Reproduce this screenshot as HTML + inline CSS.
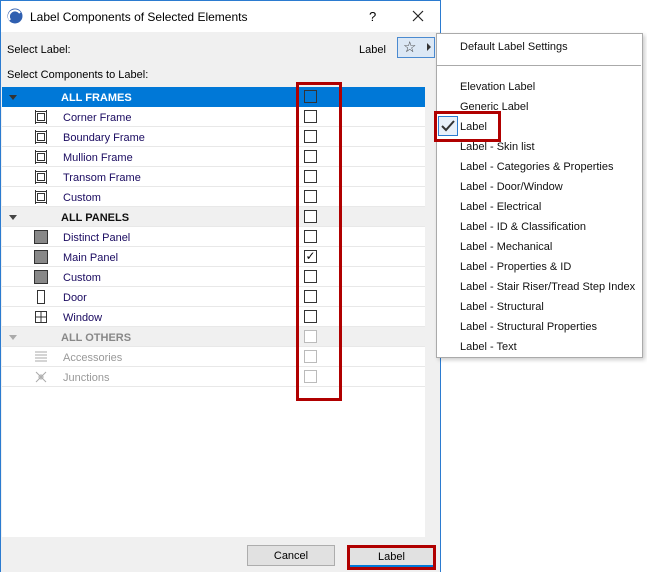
<!DOCTYPE html>
<html><head><style>
*{margin:0;padding:0;box-sizing:border-box}
body{width:647px;height:572px;background:#fff;font-family:"Liberation Sans",sans-serif;font-size:11px;color:#000;position:relative;overflow:hidden}
.a{position:absolute}
.dlg{left:0;top:0;width:441px;height:572px;background:#f0f0f0;border-left:1px solid #2b7bd0;border-top:1px solid #2b7bd0;border-right:1px solid #2b7bd0}
.title{left:1px;top:1px;width:439px;height:31px;background:#fff}
.list{left:2px;top:87px;width:423px;height:450px;background:#fff}
.row{position:absolute;left:0;width:423px;height:20px;border-bottom:1px solid #e8e8e8}
.row span{position:absolute;top:5px;color:#1a0a60}
.g span{font-weight:bold;left:59px;color:#111}
.g{background:#f0f0f0}
.cb{position:absolute;left:302px;top:3px;width:13px;height:13px;border:1px solid #333;background:#fff}
.dis span{color:#999}.dis .cb{border-color:#bbb}
.ic{position:absolute;left:32px;top:3px;width:14px;height:14px}
.pn{background:#888;border:1px solid #333}
.mi{position:absolute;left:460px;font-size:11px;color:#111}
</style></head><body>
<div class="a dlg"></div>
<div class="a title"></div>
<svg class="a" style="left:7px;top:8px" width="16" height="16"><circle cx="8" cy="8" r="7.5" fill="#2f5fb0"/><path d="M3 12 A6 6 0 0 1 13 5" stroke="#fff" stroke-width="2" fill="none"/></svg>
<div class="a" style="left:30px;top:10px;font-size:12px">Label Components of Selected Elements</div>
<div class="a" style="left:369px;top:9px;font-size:13px">?</div>
<svg class="a" style="left:412px;top:10px" width="12" height="12"><path d="M1 1l10 10M11 1L1 11" stroke="#222" stroke-width="1.2"/></svg>
<div class="a" style="left:7px;top:44px">Select Label:</div>
<div class="a" style="left:359px;top:44px">Label</div>
<div class="a" style="left:397px;top:37px;width:38px;height:21px;background:#dce8f5;border:1px solid #4a8ad0"></div>
<div class="a" style="left:403px;top:38px;font-size:15px;color:#333">☆</div>
<div class="a" style="left:427px;top:43px;width:0;height:0;border-left:4px solid #333;border-top:4px solid transparent;border-bottom:4px solid transparent"></div>
<div class="a" style="left:7px;top:69px">Select Components to Label:</div>
<div class="a list">
<div class="row g" style="top:0;background:#0078d7;border-color:#0078d7"><span style="color:#fff;left:59px">ALL FRAMES</span><div class="cb" style="background:#0078d7"></div><div class="a" style="left:7px;top:8px;border-top:5px solid #333;border-left:4px solid transparent;border-right:4px solid transparent"></div></div>
<div class="row" style="top:20px"><svg class="ic" viewBox="0 0 14 14"><path d="M1.5 1.5h11v11h-11zM3.5 3.5h7v7h-7zM1.5 0v1M12.5 0v1M1.5 13v1M12.5 13v1" stroke="#333" fill="none"/></svg><span style="left:61px">Corner Frame</span><div class="cb"></div></div>
<div class="row" style="top:40px"><svg class="ic" viewBox="0 0 14 14"><path d="M1.5 1.5h11v11h-11zM3.5 3.5h7v7h-7zM1.5 0v1M12.5 0v1M1.5 13v1M12.5 13v1" stroke="#333" fill="none"/></svg><span style="left:61px">Boundary Frame</span><div class="cb"></div></div>
<div class="row" style="top:60px"><svg class="ic" viewBox="0 0 14 14"><path d="M1.5 1.5h11v11h-11zM3.5 3.5h7v7h-7zM1.5 0v1M12.5 0v1M1.5 13v1M12.5 13v1" stroke="#333" fill="none"/></svg><span style="left:61px">Mullion Frame</span><div class="cb"></div></div>
<div class="row" style="top:80px"><svg class="ic" viewBox="0 0 14 14"><path d="M1.5 1.5h11v11h-11zM3.5 3.5h7v7h-7zM1.5 0v1M12.5 0v1M1.5 13v1M12.5 13v1" stroke="#333" fill="none"/></svg><span style="left:61px">Transom Frame</span><div class="cb"></div></div>
<div class="row" style="top:100px"><svg class="ic" viewBox="0 0 14 14"><path d="M1.5 1.5h11v11h-11zM3.5 3.5h7v7h-7zM1.5 0v1M12.5 0v1M1.5 13v1M12.5 13v1" stroke="#333" fill="none"/></svg><span style="left:61px">Custom</span><div class="cb"></div></div>
<div class="row g" style="top:120px"><span>ALL PANELS</span><div class="cb"></div><div class="a" style="left:7px;top:8px;border-top:5px solid #444;border-left:4px solid transparent;border-right:4px solid transparent"></div></div>
<div class="row" style="top:140px"><div class="ic pn"></div><span style="left:61px">Distinct Panel</span><div class="cb"></div></div>
<div class="row" style="top:160px"><div class="ic pn"></div><span style="left:61px">Main Panel</span><div class="cb" style="font-size:12px;line-height:11px;text-align:center">✓</div></div>
<div class="row" style="top:180px"><div class="ic pn"></div><span style="left:61px">Custom</span><div class="cb"></div></div>
<div class="row" style="top:200px"><div class="ic" style="left:35px;width:8px;border:1px solid #333"></div><span style="left:61px">Door</span><div class="cb"></div></div>
<div class="row" style="top:220px"><svg class="ic" viewBox="0 0 14 14"><path d="M1.5 1.5h11v11h-11zM7 1.5v11M1.5 7h11" stroke="#333" fill="none"/></svg><span style="left:61px">Window</span><div class="cb"></div></div>
<div class="row g dis" style="top:240px"><span style="color:#888">ALL OTHERS</span><div class="cb"></div><div class="a" style="left:7px;top:8px;border-top:5px solid #aaa;border-left:4px solid transparent;border-right:4px solid transparent"></div></div>
<div class="row dis" style="top:260px"><svg class="ic" viewBox="0 0 14 14"><path d="M1 2h12M1 5h12M1 8h12M1 11h12" stroke="#aaa" fill="none"/></svg><span style="left:61px">Accessories</span><div class="cb"></div></div>
<div class="row dis" style="top:280px"><svg class="ic" viewBox="0 0 14 14"><path d="M2 2l10 10M12 2l-10 10" stroke="#aaa" fill="none"/><circle cx="7" cy="7" r="2" fill="none" stroke="#aaa"/></svg><span style="left:61px">Junctions</span><div class="cb"></div></div>
</div>
<div class="a" style="left:296px;top:82px;width:46px;height:319px;border:3px solid #b00000"></div>
<div class="a" style="left:247px;top:545px;width:88px;height:21px;background:#e1e1e1;border:1px solid #adadad;text-align:center;line-height:20px">Cancel</div>
<div class="a" style="left:347px;top:545px;width:89px;height:25px;background:#e1e1e1;border:3px solid #b00000;text-align:center;line-height:19px;box-shadow:inset 0 -2px 0 #0078d7">Label</div>
<div class="a" style="left:436px;top:33px;width:207px;height:325px;background:#fff;border:1px solid #aaa;box-shadow:2px 2px 4px rgba(0,0,0,.2)"></div>
<div class="a" style="left:437px;top:65px;width:204px;height:1px;background:#aaa"></div>
<div class="mi" style="top:41px">Default Label Settings</div>
<div class="mi" style="top:81px">Elevation Label</div>
<div class="mi" style="top:101px">Generic Label</div>
<div class="mi" style="top:121px">Label</div>
<div class="mi" style="top:141px">Label -  Skin list</div>
<div class="mi" style="top:161px">Label - Categories &amp; Properties</div>
<div class="mi" style="top:181px">Label - Door/Window</div>
<div class="mi" style="top:201px">Label - Electrical</div>
<div class="mi" style="top:221px">Label - ID &amp; Classification</div>
<div class="mi" style="top:241px">Label - Mechanical</div>
<div class="mi" style="top:261px">Label - Properties &amp; ID</div>
<div class="mi" style="top:281px">Label - Stair Riser/Tread Step Index</div>
<div class="mi" style="top:301px">Label - Structural</div>
<div class="mi" style="top:321px">Label - Structural Properties</div>
<div class="mi" style="top:341px">Label - Text</div>
<div class="a" style="left:438px;top:116px;width:20px;height:20px;border:1px solid #2b7bd0;background:#e8f0fa"></div>
<svg class="a" style="left:440px;top:119px" width="16" height="14"><path d="M2 7l4 4 8-9" stroke="#333" stroke-width="2" fill="none"/></svg>
<div class="a" style="left:434px;top:111px;width:67px;height:31px;border:3px solid #b00000"></div>
</body></html>
